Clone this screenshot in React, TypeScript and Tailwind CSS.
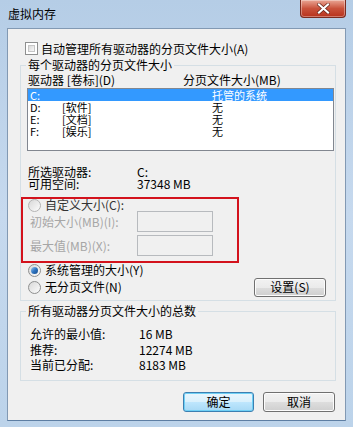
import React from "react";

function Checkbox() {
  return (
    <span className="block h-[13px] w-[13px] border border-[#8e8f8f] bg-white p-[2px]">
      <span className="block h-full w-full border border-[#c6c6c6] bg-gradient-to-br from-[#d9d9d9] to-[#f9f9f9]" />
    </span>
  );
}

function Radio({ checked, dim }: { checked?: boolean; dim?: boolean }) {
  return (
    <span
      className={`flex h-[13px] w-[13px] shrink-0 items-center justify-center rounded-full border bg-gradient-to-br from-[#d8d8d8] to-[#fcfcfc] ${
        dim ? "border-[#b4b4b4]" : "border-[#8e8f8f]"
      }`}
    >
      {checked && (
        <span className="h-[7px] w-[7px] rounded-full bg-gradient-to-br from-[#9ccbf3] via-[#2f74c0] to-[#164d8f]" />
      )}
    </span>
  );
}

function Field() {
  return <span className="block h-[21px] w-[76px] border border-[#b7babe] bg-[#f0f0f0]" />;
}

const drives = [
  { d: "C:", label: "", size: "托管的系统", sel: true },
  { d: "D:", label: "[软件]", size: "无" },
  { d: "E:", label: "[文档]", size: "无" },
  { d: "F:", label: "[娱乐]", size: "无" },
];

export default function App() {
  return (
    <div className="flex h-[427px] w-[353px] flex-col overflow-hidden bg-gradient-to-b from-[#b5cde6] via-[#c6d9ee] to-[#bcd3ea] font-['Noto_Sans_CJK_SC',sans-serif] text-[12px] leading-[12px] text-black">
      {/* title bar */}
      <div className="flex h-[28px] shrink-0 items-start justify-between">
        <span className="ml-[8px] mt-[8px] text-[12px] leading-[12px]">虚拟内存</span>
        <div className="mr-[7px] flex h-[18px] w-[46px] items-center justify-center rounded-b-[4px] border border-t-0 border-[#7a2b20] bg-gradient-to-b from-[#e9a595] via-[#c9513b] to-[#b7321c] shadow-[inset_0_0_0_1px_rgba(255,255,255,0.35)]">
          <svg width="13" height="11" viewBox="0 0 13 11">
            <path d="M2 1.5 L11 9.5 M11 1.5 L2 9.5" stroke="#5a1a10" strokeWidth="3.4" strokeLinecap="square" />
            <path d="M2 1.5 L11 9.5 M11 1.5 L2 9.5" stroke="#ffffff" strokeWidth="2.2" strokeLinecap="square" />
          </svg>
        </div>
      </div>

      {/* client area */}
      <div className="mx-[7px] flex h-[393px] flex-col border border-[#8299b3] border-b-[#5d7ea3] bg-[#f0f0f0]">
        <div className="ml-[17px] mt-[13px] flex h-[13px] items-center gap-[3px]">
          <Checkbox />
          <span>自动管理所有驱动器的分页文件大小(A)</span>
        </div>

        {/* group 1 */}
        <div className="relative ml-[12px] mt-[10px] flex h-[236px] w-[316px] flex-col border border-[#d5dfe5]">
          <span className="absolute -top-[7px] left-[5px] bg-[#f0f0f0] px-[2px]">每个驱动器的分页文件大小</span>
          <div className="ml-[7px] mt-[8px] flex h-[12px]">
            <span className="w-[155px]">驱动器 [卷标](D)</span>
            <span>分页文件大小(MB)</span>
          </div>
          <div className="ml-[6px] mt-[2px] h-[63px] w-[307px] border border-[#828790] bg-white text-[11px] leading-[11px]">
            {drives.map((r) => (
              <div
                key={r.d}
                className={`flex h-[12px] items-center ${r.sel ? "bg-[#3399ff] text-white" : ""}`}
              >
                <span className="w-[34px] pl-[2px]">{r.d}</span>
                <span className="w-[150px]">{r.label}</span>
                <span>{r.size}</span>
              </div>
            ))}
          </div>

          <div className="ml-[7px] mt-[15px] flex h-[12px]">
            <span className="w-[109px]">所选驱动器:</span>
            <span>C:</span>
          </div>
          <div className="ml-[7px] flex h-[12px]">
            <span className="w-[109px]">可用空间:</span>
            <span>37348 MB</span>
          </div>

          <div className="mt-[7px] flex h-[66px] w-[218px] flex-col border-2 border-[#d3121c]">
            <div className="ml-[5px] flex h-[12px] items-center gap-[4px]">
              <Radio dim />
              <span className="text-[#333]">自定义大小(C):</span>
            </div>
            <div className="ml-[7px] flex h-[21px] items-center">
              <span className="w-[107px] text-[#a6a6a6]">初始大小(MB)(I):</span>
              <Field />
            </div>
            <div className="ml-[7px] mt-[3px] flex h-[21px] items-center">
              <span className="w-[107px] text-[#a6a6a6]">最大值(MB)(X):</span>
              <Field />
            </div>
          </div>

          <div className="ml-[7px] mt-[1px] flex h-[12px] items-center gap-[4px]">
            <Radio checked />
            <span>系统管理的大小(Y)</span>
          </div>
          <div className="ml-[7px] mr-[9px] mt-[2px] flex h-[18px] items-center justify-between">
            <div className="flex items-center gap-[4px]">
              <Radio />
              <span>无分页文件(N)</span>
            </div>
            <button className="flex h-[19px] w-[72px] items-center justify-center rounded-[3px] border border-[#707070] bg-[linear-gradient(#f2f2f2_0%,#ebebeb_50%,#dddddd_51%,#cfcfcf_100%)] shadow-[inset_0_0_0_1px_#fcfcfc]">
              设置(S)
            </button>
          </div>
        </div>

        {/* group 2 */}
        <div className="relative ml-[12px] mt-[10px] flex h-[70px] w-[316px] flex-col border border-[#d5dfe5]">
          <span className="absolute -top-[7px] left-[5px] bg-[#f0f0f0] px-[2px]">所有驱动器分页文件大小的总数</span>
          <div className="ml-[9px] mt-[16px] flex h-[12px]">
            <span className="w-[109px]">允许的最小值:</span>
            <span>16 MB</span>
          </div>
          <div className="ml-[9px] mt-[4px] flex h-[12px]">
            <span className="w-[109px]">推荐:</span>
            <span>12274 MB</span>
          </div>
          <div className="ml-[9px] mt-[3px] flex h-[12px]">
            <span className="w-[109px]">当前已分配:</span>
            <span>8183 MB</span>
          </div>
        </div>

        <div className="mr-[10px] mt-[11px] flex justify-end gap-[9px]">
          <button className="flex h-[20px] w-[71px] items-center justify-center rounded-[3px] border border-[#3c7fb1] bg-[linear-gradient(#eaf6fd_0%,#d9f0fc_50%,#bee6fd_51%,#a7d9f5_100%)] shadow-[inset_0_0_0_1px_#6fd0f5]">
            确定
          </button>
          <button className="flex h-[20px] w-[72px] items-center justify-center rounded-[3px] border border-[#707070] bg-[linear-gradient(#f2f2f2_0%,#ebebeb_50%,#dddddd_51%,#cfcfcf_100%)] shadow-[inset_0_0_0_1px_#fcfcfc]">
            取消
          </button>
        </div>
      </div>
    </div>
  );
}
